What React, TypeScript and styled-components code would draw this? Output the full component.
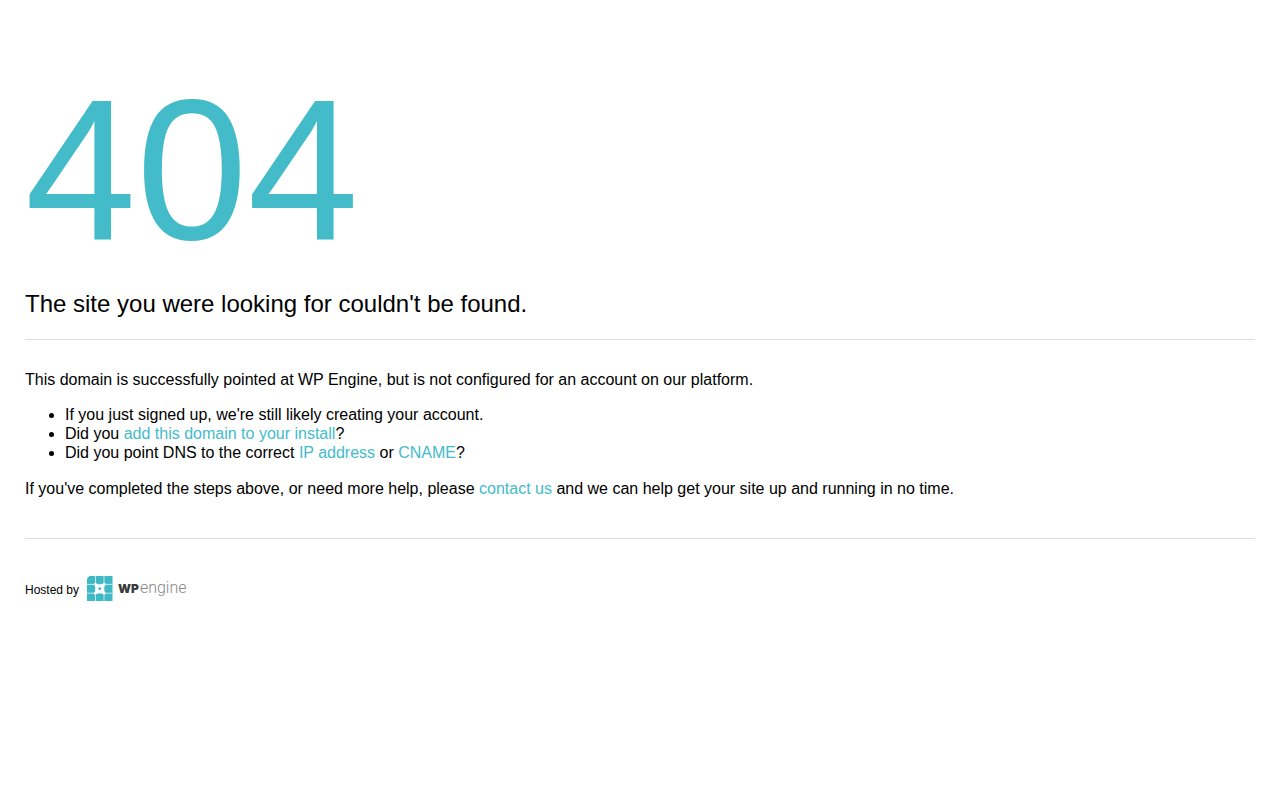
import React from "react";
import styled, { createGlobalStyle } from "styled-components";

const teal = "#44bbc8";

const GlobalStyle = createGlobalStyle`
  body {
    margin: 0;
    background: #fff;
    color: #000;
    font-family: "Liberation Sans", Arial, Helvetica, sans-serif;
    font-size: 16px;
    line-height: 19px;
  }
`;

const Page = styled.main`
  padding: 70px 25px 40px;
`;

const Code = styled.h1`
  margin: 0 0 20px;
  color: ${teal};
  font-size: 200px;
  font-weight: 400;
  line-height: 200px;
`;

const Subtitle = styled.h2`
  margin: 0 0 21px;
  font-size: 24px;
  font-weight: 400;
  line-height: 28px;
`;

const Message = styled.section`
  padding: 30px 0 40px;
  border: solid #ddd;
  border-width: 1px 0;
`;

const Paragraph = styled.p`
  margin: 0;
`;

const Steps = styled.ul`
  margin: 16px 0 17px;
  padding-left: 40px;
`;

const Link = styled.a`
  color: ${teal};
  text-decoration: none;
`;

const Hosted = styled.footer`
  display: flex;
  align-items: flex-end;
  gap: 8px;
  padding-top: 37px;
  font-size: 12px;
  line-height: 22px;
`;

const Brand = styled.div`
  display: flex;
  align-items: center;
  gap: 5px;
`;

const Mark = styled.svg`
  display: block;
`;

const Wordmark = styled.span`
  display: flex;
  align-items: baseline;
  gap: 1px;
  line-height: 24px;
`;

const Strong = styled.span`
  color: #3a3a3a;
  font-family: Inter, sans-serif;
  font-size: 12px;
  font-weight: 900;
`;

const Light = styled.span`
  color: #888;
  font-family: Roboto, sans-serif;
  font-size: 16px;
  font-weight: 300;
`;

export default function App() {
  return (
    <>
      <GlobalStyle />
      <Page>
        <Code>404</Code>
        <Subtitle>The site you were looking for couldn't be found.</Subtitle>
        <Message>
          <Paragraph>
            This domain is successfully pointed at WP Engine, but is not configured for an account on our platform.
          </Paragraph>
          <Steps>
            <li>If you just signed up, we're still likely creating your account.</li>
            <li>
              Did you <Link href="#install">add this domain to your install</Link>?
            </li>
            <li>
              Did you point DNS to the correct <Link href="#ip">IP address</Link> or <Link href="#cname">CNAME</Link>?
            </li>
          </Steps>
          <Paragraph>
            If you've completed the steps above, or need more help, please <Link href="#contact">contact us</Link> and
            we can help get your site up and running in no time.
          </Paragraph>
        </Message>
        <Hosted>
          <span>Hosted by</span>
          <Brand>
            <Mark width="26" height="25" viewBox="0 0 26 25" aria-hidden="true">
              <path fill="#3fb9c6" d="M2.500 0H25.500V25H0V2.500z" />
              <path stroke="#fff" strokeOpacity="0.75" strokeWidth="0.9" d="M8.500 0V25M17 0V25M0 8.400H25.500M0 17.200H25.500" />
              <path
                fill="#fff"
                d="M7 9V7H9L10.500 8.500H15l1.500-1.500H18.500V9l-1.500 1.500V15l1.500 1.500V18.500h-2L15 17h-4.500L9 18.500H7v-2L8.500 15v-4.500z"
              />
              <circle cx="12.700" cy="12.700" r="1.400" fill="#3fb9c6" />
            </Mark>
            <Wordmark>
              <Strong>WP</Strong>
              <Light>engine</Light>
            </Wordmark>
          </Brand>
        </Hosted>
      </Page>
    </>
  );
}
